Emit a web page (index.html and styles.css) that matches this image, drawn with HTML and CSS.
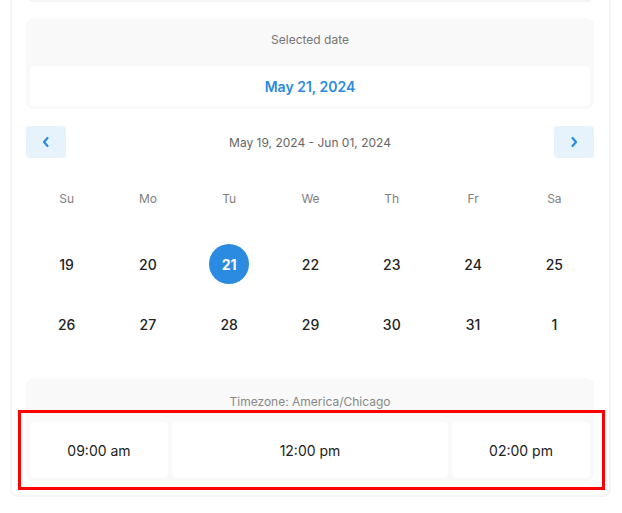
FILE: index.html
```html
<!DOCTYPE html>
<html>
<head>
<meta charset="utf-8">
<link rel="stylesheet" href="styles.css">
</head>
<body>
<div class="panel">
  <div class="prev-card"></div>

  <div class="selected-card">
    <div class="selected-label">Selected date</div>
    <div class="selected-value">May 21, 2024</div>
  </div>

  <div class="nav">
    <button class="nav-btn" aria-label="Previous">
      <svg width="10" height="12" viewBox="0 0 10 12"><path d="M6.5 2 L3 6 L6.5 10" fill="none" stroke="#2b8be0" stroke-width="2.2" stroke-linecap="round" stroke-linejoin="round"/></svg>
    </button>
    <div class="range">May 19, 2024 - Jun 01, 2024</div>
    <button class="nav-btn" aria-label="Next">
      <svg width="10" height="12" viewBox="0 0 10 12"><path d="M3.5 2 L7 6 L3.5 10" fill="none" stroke="#2b8be0" stroke-width="2.2" stroke-linecap="round" stroke-linejoin="round"/></svg>
    </button>
  </div>

  <div class="weekdays">
    <div>Su</div><div>Mo</div><div>Tu</div><div>We</div><div>Th</div><div>Fr</div><div>Sa</div>
  </div>

  <div class="days">
    <div class="day"><span>19</span></div>
    <div class="day"><span>20</span></div>
    <div class="day selected"><span>21</span></div>
    <div class="day"><span>22</span></div>
    <div class="day"><span>23</span></div>
    <div class="day"><span>24</span></div>
    <div class="day"><span>25</span></div>
    <div class="day"><span>26</span></div>
    <div class="day"><span>27</span></div>
    <div class="day"><span>28</span></div>
    <div class="day"><span>29</span></div>
    <div class="day"><span>30</span></div>
    <div class="day"><span>31</span></div>
    <div class="day"><span>1</span></div>
  </div>

  <div class="tz-card">
    <div class="tz-label">Timezone: America/Chicago</div>
    <div class="slots">
      <div class="slot">09:00 am</div>
      <div class="slot wide">12:00 pm</div>
      <div class="slot">02:00 pm</div>
    </div>
  </div>
</div>
<div class="highlight"></div>
</body>
</html>
```

FILE: styles.css
```css
* { box-sizing: border-box; }

html, body {
  margin: 0;
  padding: 0;
  background: #ffffff;
  font-family: Inter, "Noto Sans", sans-serif;
  overflow: hidden;
}

.panel {
  margin: -42px 0 0 10px;
  width: 601px;
  border: 2px solid #f5f5f5;
  border-radius: 8px;
  padding: 0 14px 14px;
  background: #ffffff;
}

.prev-card {
  height: 42px;
  border: 2px solid #f5f5f5;
  border-top: none;
  border-radius: 0 0 8px 8px;
  background: #ffffff;
}

.selected-card {
  margin-top: 16px;
  width: 568px;
  background: #f9f9f9;
  border-radius: 8px;
  padding: 14px 4px 3px;
}

.selected-label {
  text-align: center;
  font-size: 12px;
  line-height: 16px;
  color: #767676;
  height: 34px;
}

.selected-value {
  height: 40px;
  background: #ffffff;
  border-radius: 3px;
  display: flex;
  align-items: center;
  justify-content: center;
  font-size: 14px;
  font-weight: 600;
  color: #2b8be0;
}

.nav {
  margin-top: 17px;
  display: flex;
  align-items: center;
  justify-content: space-between;
  width: 568px;
}

.nav-btn {
  width: 40px;
  height: 32px;
  border: none;
  border-radius: 4px;
  background: #e6f3fd;
  display: flex;
  align-items: center;
  justify-content: center;
  padding: 0;
}

.range {
  font-size: 12px;
  color: #666666;
}

.weekdays {
  margin-top: 20px;
  display: grid;
  grid-template-columns: repeat(7, 1fr);
  height: 40px;
  align-items: center;
  text-align: center;
  font-size: 12px;
  color: #808080;
}

.days {
  margin-top: 16px;
  display: grid;
  grid-template-columns: repeat(7, 1fr);
  grid-auto-rows: 60px;
}

.day {
  display: flex;
  align-items: center;
  justify-content: center;
  font-size: 14px;
  font-weight: 500;
  color: #222222;
}

.day span {
  width: 40px;
  height: 40px;
  border-radius: 50%;
  display: flex;
  align-items: center;
  justify-content: center;
}

.day.selected span {
  background: #2b8be0;
  color: #ffffff;
  font-weight: 700;
}

.tz-card {
  margin-top: 24px;
  width: 568px;
  background: #f9f9f9;
  border-radius: 8px;
  padding: 16px 4px 3px;
}

.tz-label {
  text-align: center;
  font-size: 12px;
  line-height: 16px;
  color: #888888;
}

.slots {
  margin-top: 12px;
  display: flex;
  gap: 4px;
}

.slot {
  flex: 1;
  height: 56px;
  background: #ffffff;
  border-radius: 5px;
  display: flex;
  align-items: center;
  justify-content: center;
  font-size: 14px;
  color: #222222;
}

.slot.wide { flex: 2; }

.highlight {
  position: absolute;
  left: 18px;
  top: 410px;
  width: 587px;
  height: 80px;
  border: 3px solid #ff0000;
}
```
